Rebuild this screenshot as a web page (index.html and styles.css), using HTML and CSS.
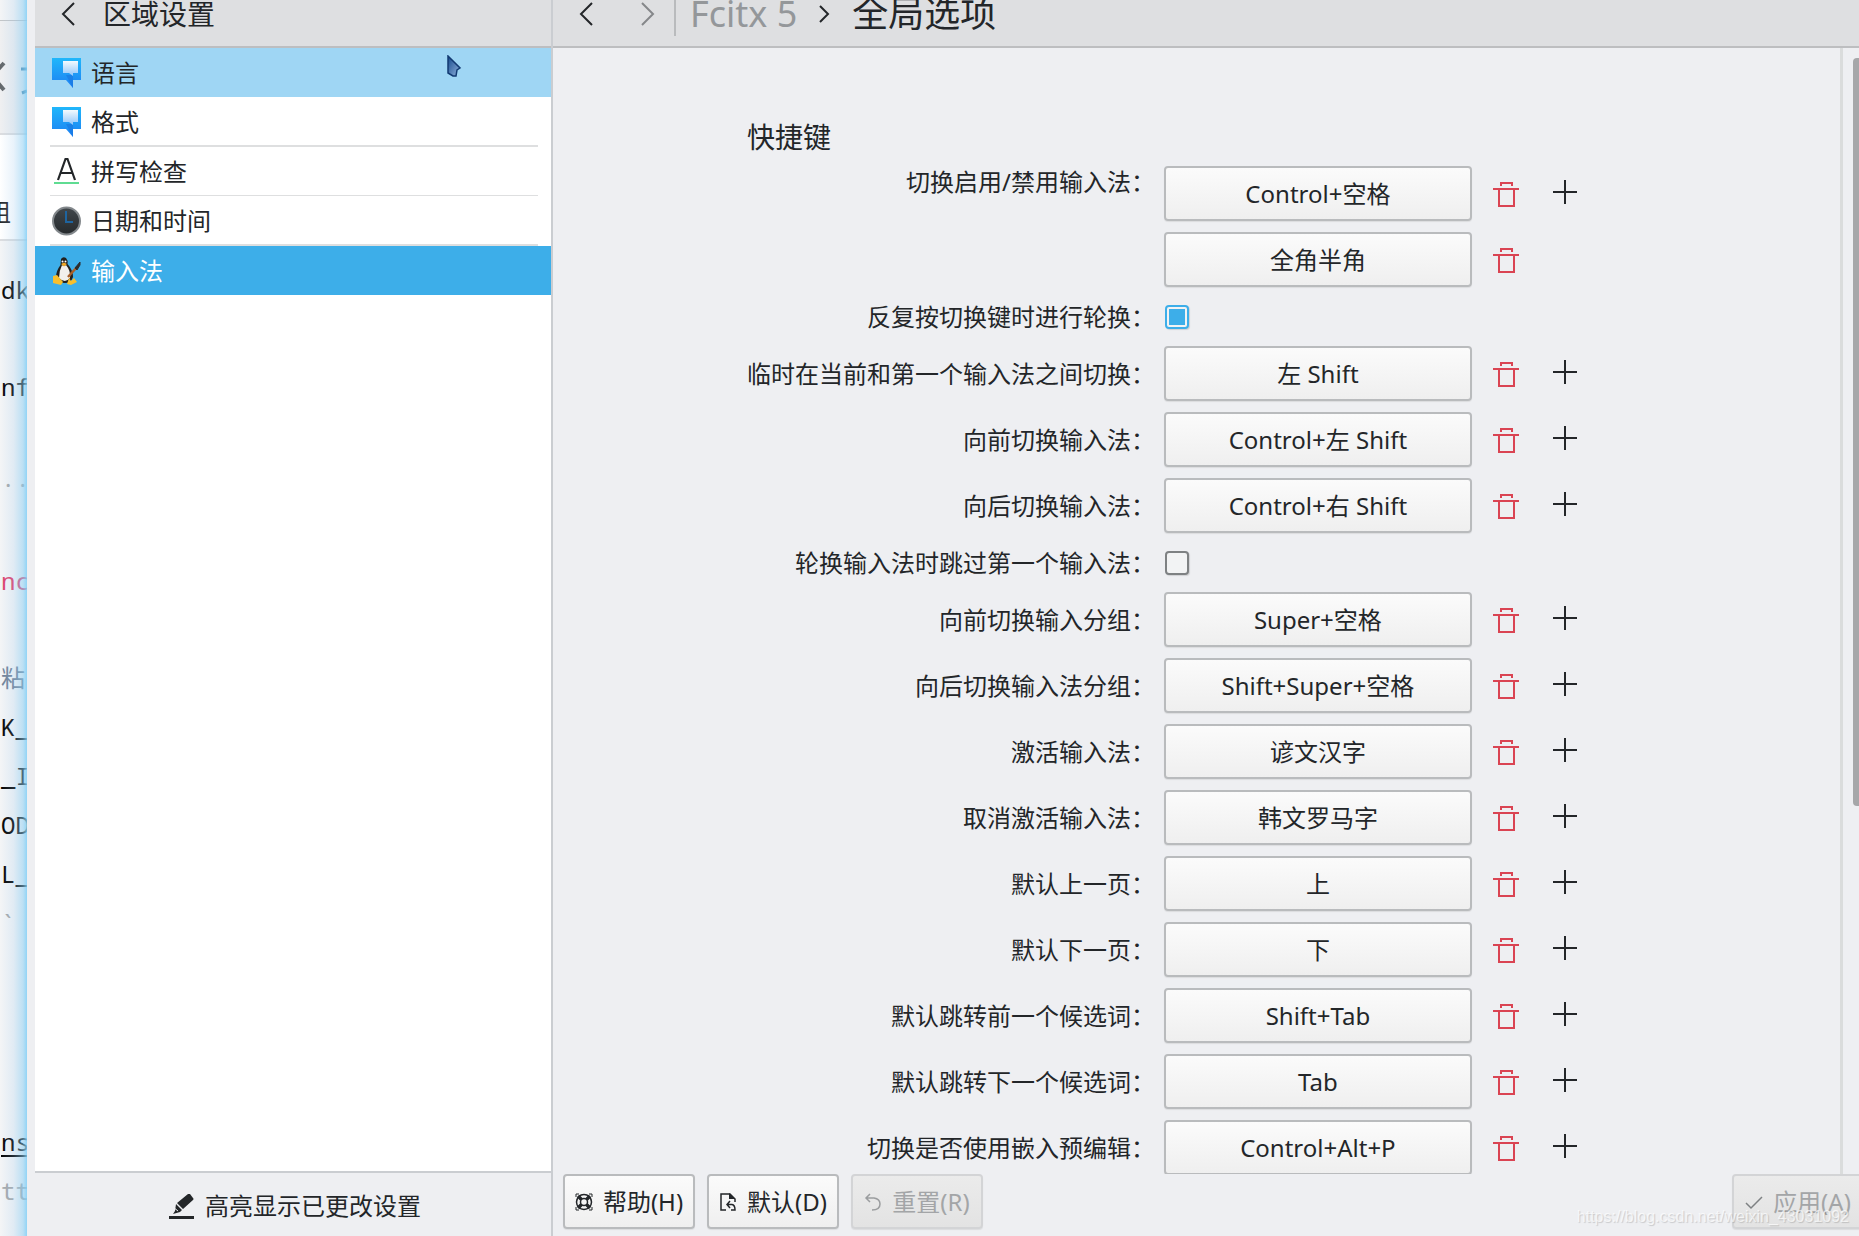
FILE: index.html
```
<!DOCTYPE html>
<html lang="zh-CN">
<head>
<meta charset="utf-8">
<title>区域设置</title>
<link rel="stylesheet" href="styles.css">
</head>
<body>
<svg class="defs" aria-hidden="true">
  <defs>
    <linearGradient id="blue" x1="0" y1="0" x2="0" y2="1"><stop offset="0" stop-color="#20b7fb"/><stop offset="1" stop-color="#1d7ff2"/></linearGradient>
    <linearGradient id="pale" x1="0" y1="0" x2="0" y2="1"><stop offset="0" stop-color="#f4fafe"/><stop offset="1" stop-color="#8fc5fa"/></linearGradient>
    <linearGradient id="clockface" x1="0" y1="0" x2="0" y2="1"><stop offset="0" stop-color="#41474c"/><stop offset="1" stop-color="#25292c"/></linearGradient>
    <linearGradient id="pointer" x1="0" y1="0" x2="1" y2="1"><stop offset="0" stop-color="#16498c"/><stop offset="1" stop-color="#8fb2dc"/></linearGradient>
    <symbol id="locale" viewBox="0 0 29 30">
      <path d="M0 0H29V22H21V30L14 22H0Z" fill="url(#blue)"/>
      <path d="M14 17L21 30V17Z" fill="#1774dd" opacity=".6"/>
      <path d="M11 3H26V15H21V18L17 15H11Z" fill="url(#pale)"/>
    </symbol>
    <symbol id="trash" viewBox="0 0 26 26">
      <path d="M8 5V2H19V5M0 8H26M6 8V25H21V8" fill="none" stroke="#da4453" stroke-width="2"/>
    </symbol>
    <symbol id="plus" viewBox="0 0 24 24">
      <path d="M12 0V24M0 12H24" fill="none" stroke="#232629" stroke-width="2"/>
    </symbol>
  </defs>
</svg>

<div class="desktop">
  <div class="backdrop" aria-hidden="true">
    <div class="back-title"></div>
    <div class="back-toolbar">
      <svg width="27" height="34" viewBox="0 0 27 34" fill="none"><path d="M4 2L-8 15L4 29" stroke="#63676a" stroke-width="4"/><path d="M21 8H27M22 32L27 30" stroke="#3f7fa5" stroke-width="3"/></svg>
    </div>
    <div class="back-tab"><span>组</span></div>
    <div class="back-code">
      <div>dk</div><div></div><div>nf</div><div></div><div class="dim">··</div><div></div>
      <div class="red">nc</div><div></div><div class="slate">粘</div><div>K_</div><div>_I</div><div>OD</div><div>L_</div><div class="dim">`</div>
      <div></div><div></div><div></div><div class="half"></div><div class="link">ns</div><div class="dim">tt</div><div class="dim">no</div>
    </div>
  </div>

  <div class="window">
    <aside class="sidebar">
      <header class="bar">
        <button class="tool" aria-label="返回"><svg width="14" height="24" viewBox="0 0 14 24"><path d="M13 1L2 12L13 23"/></svg></button>
        <h2>区域设置</h2>
      </header>
      <nav>
        <ul>
          <li class="hover"><a href="#"><svg width="29" height="30"><use href="#locale"/></svg>语言</a></li>
          <li><a href="#"><svg width="29" height="30"><use href="#locale"/></svg>格式</a></li>
          <li><a href="#"><svg width="29" height="30" viewBox="0 0 29 30"><path d="M6 23L13.500 2H15.500L23 23M9 16H20" fill="none" stroke="#232629" stroke-width="2.200"/><path d="M2 26H27" stroke="#5fdc92" stroke-width="2"/></svg>拼写检查</a></li>
          <li><a href="#"><svg width="29" height="30" viewBox="0 0 29 30"><circle cx="14.500" cy="15" r="13.500" fill="url(#clockface)" stroke="#83888c" stroke-width="2"/><path d="M14 5V16H21" fill="none" stroke="#1e64a0" stroke-width="2"/></svg>日期和时间</a></li>
          <li class="current"><a href="#" aria-current="page"><svg width="29" height="30" viewBox="0 0 29 30">
            <path d="M9 3Q11 0 14 2Q16 4 15.500 8Q21 14 21 21Q19 27 13 27Q6 27 4 21Q4 15 8.500 9Z" fill="#22211f"/>
            <path d="M10 9Q12 11 14 9Q19 15 18 22Q13 28 7 22Q7 15 10 9Z" fill="#f2f0ec"/>
            <circle cx="10.500" cy="5.500" r="1" fill="#fff"/><circle cx="13.500" cy="5.500" r="1" fill="#fff"/>
            <path d="M9 8L12 6.500L15 8L12 10.500Z" fill="#f0a928"/>
            <path d="M1 20L5 19L11 26L9 29L1 27ZM17 22L19 25L22 22L25 26L19 29L15 28Z" fill="#f8bf2c"/>
            <path d="M16 21L25 11" stroke="#a8602b" stroke-width="2.500"/><path d="M23 12L28 6L28 9L25 14Z" fill="#2d2b2a" stroke="#2d2b2a"/>
          </svg>输入法</a></li>
        </ul>
      </nav>
      <footer>
        <button class="highlight"><svg width="25" height="25" viewBox="0 0 25 25"><path d="M0 22H25V25H0Z" fill="#232629"/><path d="M19 0Q20 -1 21 0L24 4Q25 5 24 6L14 15L8 9ZM7 10L13 16L11 18L4 20L6 17Z" fill="#232629"/><path d="M4 13L9 17" stroke="#eeeff2"/></svg>高亮显示已更改设置</button>
      </footer>
    </aside>

    <main>
      <header class="bar">
        <button class="tool" aria-label="后退"><svg width="14" height="24" viewBox="0 0 14 24"><path d="M13 1L2 12L13 23"/></svg></button>
        <button class="tool forward" aria-label="前进" disabled><svg width="14" height="24" viewBox="0 0 14 24"><path d="M1 1L12 12L1 23"/></svg></button>
        <div class="crumbs">
          <a href="#">Fcitx 5</a>
          <svg width="11" height="18" viewBox="0 0 11 18"><path d="M1 1L9 9L1 17"/></svg>
          <h1>全局选项</h1>
        </div>
      </header>

      <div class="scroller">
        <form class="content" id="options">
          <h3>快捷键</h3>
          <div class="row"><span class="label top">切换启用/禁用输入法：</span><button type="button" class="btn">Control+空格</button><button type="button" class="act" aria-label="删除"><svg width="26" height="26"><use href="#trash"/></svg></button><button type="button" class="act add" aria-label="添加"><svg width="24" height="24"><use href="#plus"/></svg></button></div>
          <div class="row"><span></span><button type="button" class="btn">全角半角</button><button type="button" class="act" aria-label="删除"><svg width="26" height="26"><use href="#trash"/></svg></button></div>
          <div class="row check"><label class="label" for="cycle">反复按切换键时进行轮换：</label><input type="checkbox" id="cycle" checked></div>
          <div class="row"><span class="label">临时在当前和第一个输入法之间切换：</span><button type="button" class="btn">左 Shift</button><button type="button" class="act" aria-label="删除"><svg width="26" height="26"><use href="#trash"/></svg></button><button type="button" class="act add" aria-label="添加"><svg width="24" height="24"><use href="#plus"/></svg></button></div>
          <div class="row"><span class="label">向前切换输入法：</span><button type="button" class="btn">Control+左 Shift</button><button type="button" class="act" aria-label="删除"><svg width="26" height="26"><use href="#trash"/></svg></button><button type="button" class="act add" aria-label="添加"><svg width="24" height="24"><use href="#plus"/></svg></button></div>
          <div class="row"><span class="label">向后切换输入法：</span><button type="button" class="btn">Control+右 Shift</button><button type="button" class="act" aria-label="删除"><svg width="26" height="26"><use href="#trash"/></svg></button><button type="button" class="act add" aria-label="添加"><svg width="24" height="24"><use href="#plus"/></svg></button></div>
          <div class="row check"><label class="label" for="skip">轮换输入法时跳过第一个输入法：</label><input type="checkbox" id="skip"></div>
          <div class="row"><span class="label">向前切换输入分组：</span><button type="button" class="btn">Super+空格</button><button type="button" class="act" aria-label="删除"><svg width="26" height="26"><use href="#trash"/></svg></button><button type="button" class="act add" aria-label="添加"><svg width="24" height="24"><use href="#plus"/></svg></button></div>
          <div class="row"><span class="label">向后切换输入法分组：</span><button type="button" class="btn">Shift+Super+空格</button><button type="button" class="act" aria-label="删除"><svg width="26" height="26"><use href="#trash"/></svg></button><button type="button" class="act add" aria-label="添加"><svg width="24" height="24"><use href="#plus"/></svg></button></div>
          <div class="row"><span class="label">激活输入法：</span><button type="button" class="btn">谚文汉字</button><button type="button" class="act" aria-label="删除"><svg width="26" height="26"><use href="#trash"/></svg></button><button type="button" class="act add" aria-label="添加"><svg width="24" height="24"><use href="#plus"/></svg></button></div>
          <div class="row"><span class="label">取消激活输入法：</span><button type="button" class="btn">韩文罗马字</button><button type="button" class="act" aria-label="删除"><svg width="26" height="26"><use href="#trash"/></svg></button><button type="button" class="act add" aria-label="添加"><svg width="24" height="24"><use href="#plus"/></svg></button></div>
          <div class="row"><span class="label">默认上一页：</span><button type="button" class="btn">上</button><button type="button" class="act" aria-label="删除"><svg width="26" height="26"><use href="#trash"/></svg></button><button type="button" class="act add" aria-label="添加"><svg width="24" height="24"><use href="#plus"/></svg></button></div>
          <div class="row"><span class="label">默认下一页：</span><button type="button" class="btn">下</button><button type="button" class="act" aria-label="删除"><svg width="26" height="26"><use href="#trash"/></svg></button><button type="button" class="act add" aria-label="添加"><svg width="24" height="24"><use href="#plus"/></svg></button></div>
          <div class="row"><span class="label">默认跳转前一个候选词：</span><button type="button" class="btn">Shift+Tab</button><button type="button" class="act" aria-label="删除"><svg width="26" height="26"><use href="#trash"/></svg></button><button type="button" class="act add" aria-label="添加"><svg width="24" height="24"><use href="#plus"/></svg></button></div>
          <div class="row"><span class="label">默认跳转下一个候选词：</span><button type="button" class="btn">Tab</button><button type="button" class="act" aria-label="删除"><svg width="26" height="26"><use href="#trash"/></svg></button><button type="button" class="act add" aria-label="添加"><svg width="24" height="24"><use href="#plus"/></svg></button></div>
          <div class="row"><span class="label">切换是否使用嵌入预编辑：</span><button type="button" class="btn">Control+Alt+P</button><button type="button" class="act" aria-label="删除"><svg width="26" height="26"><use href="#trash"/></svg></button><button type="button" class="act add" aria-label="添加"><svg width="24" height="24"><use href="#plus"/></svg></button></div>
        </form>
        <div class="track"><div class="thumb"></div></div>
      </div>

      <footer class="actions">
        <button class="btn"><svg width="18" height="18" viewBox="0 0 18 18"><g fill="none" stroke="#232629"><circle cx="9" cy="9" r="7.500" stroke-width="1.500"/><circle cx="9" cy="9" r="3.500" stroke-width="1.500"/><path d="M3 3L6.500 6.500M15 3L11.500 6.500M3 15L6.500 11.500M15 15L11.500 11.500" stroke-width="3.500"/><path d="M1 4V1H4M14 1H17V4M17 14V17H14M4 17H1V14"/></g></svg>帮助(H)</button>
        <button class="btn"><svg width="18" height="18" viewBox="0 0 18 18"><g fill="none" stroke="#232629" stroke-width="1.500"><path d="M7 17H2V1H11L16 6V9"/><path d="M11 8L8 11.500L11 15M8 11.500H13Q16 12 16 17H12"/></g><path d="M10 0L16 6H10Z" fill="#232629"/></svg>默认(D)</button>
        <button class="btn" disabled><svg width="18" height="18" viewBox="0 0 18 18"><path d="M6 1L2 5L6 9M2 5H10Q16 6 16 11Q16 17 8 17" fill="none" stroke="#9b9d9f" stroke-width="1.500"/></svg>重置(R)</button>
        <button class="btn apply" disabled><svg width="18" height="18" viewBox="0 0 18 18"><path d="M1 10L6 15L17 4" fill="none" stroke="#7e8183" stroke-width="1.500"/></svg>应用(A)</button>
      </footer>
    </main>
  </div>

  <svg class="cursor" width="15" height="24" viewBox="0 0 15 24" aria-hidden="true"><path d="M1 1L13 13L10 15L9 21L6 21L1 18Z" fill="url(#pointer)" stroke="#123a72" stroke-width="1.500"/></svg>
  <div class="watermark">https://blog.csdn.net/weixin_43031092</div>
</div>
</body>
</html>
```
FILE: styles.css
```
* { box-sizing: border-box; }

body {
  margin: 0;
  color: #232629;
  font: 24px/32px "Noto Sans", "Noto Sans CJK SC", sans-serif;
}

h1, h2, h3, ul { margin: 0; padding: 0; font-weight: 400; }
ul { list-style: none; }
a { color: inherit; text-decoration: none; }
button { font: inherit; color: inherit; padding: 0; border: 0; background: none; }
svg { flex: none; display: block; }
.defs { position: absolute; width: 0; height: 0; }

.desktop {
  position: relative;
  display: flex;
  height: 100vh;
  overflow: hidden;
}

/* strip of the window behind, shaded by the glow of the front window */
.backdrop {
  position: relative;
  flex: none;
  width: 27px;
  overflow: hidden;
  background: #f4f5f6;
  font: 24px/49px "Noto Sans CJK SC", sans-serif;
  white-space: nowrap;
}
.backdrop::after {
  content: "";
  position: absolute;
  inset: 0;
  background: linear-gradient(90deg, #8ac6ea00, #9cc8ec38 50%, #8bcdf288 85%, #83cff6e0);
}
.back-title { height: 21px; border-bottom: 1px solid #c3c5c7; }
.back-toolbar { height: 114px; padding-top: 40px; background: #f0f0f1; border-bottom: 2px solid #dcdddf; }
.back-tab { height: 106px; padding-top: 51px; background: #fff; border-bottom: 2px solid #dcdddf; }
.back-tab span { margin-left: -13px; }
.back-code { padding-top: 24px; color: #000; font-family: "Noto Sans Mono", "DejaVu Sans Mono", "Noto Sans CJK SC", monospace; }
.back-code div { height: 49px; padding-left: 1px; }
.back-code div:empty { height: 48px; }
.back-code .half:empty { height: 26px; }
.back-code .dim { color: #a5a8aa; }
.back-code .red { color: #e0406c; }
.back-code .slate { color: #6f8197; }
.link { text-decoration: underline; text-underline-offset: 4px; }

.window {
  flex: 1;
  min-width: 0;
  display: flex;
  padding-left: 8px;
  background: #eeeff2;
}
.sidebar {
  flex: none;
  width: 518px;
  display: flex;
  flex-direction: column;
  border-right: 2px solid #cacdd1;
}
.bar {
  flex: none;
  display: flex;
  align-items: center;
  height: 48px;
  padding: 0 26px 18px;
  background: #dedfe1;
  border-bottom: 2px solid #bdbec0;
}
.bar svg { fill: none; stroke: #232629; stroke-width: 2; }
h2 { margin-left: 28px; font-size: 28px; line-height: 28px; }

nav { flex: 1; background: #fff; }
nav li { padding: 0 13px 0 15px; }
nav a {
  display: flex;
  align-items: center;
  gap: 10px;
  height: 49px;
  padding: 2px 0 0 2px;
  border-bottom: 1px solid #dedfe0;
}
nav li:nth-child(even) a { height: 50px; border-width: 2px; }
nav .hover { background: #9fd6f4; }
nav .hover a, nav .current a { border-color: transparent; }
nav .current { background: #3daee9; color: #fff; }

.sidebar footer {
  flex: none;
  display: flex;
  justify-content: center;
  align-items: center;
  height: 65px;
  padding: 3px 0 0 4px;
  border-top: 2px solid #cacdd1;
}
.highlight { display: flex; align-items: center; gap: 11px; }

main {
  flex: 1;
  min-width: 0;
  display: flex;
  flex-direction: column;
}
.forward { margin-left: 48px; }
.bar .forward svg { stroke: #85878a; }
.crumbs {
  display: flex;
  align-items: center;
  gap: 22px;
  height: 44px;
  margin: 0 0 0 19px;
  padding: 0 0 0 14px;
  border-left: 2px solid #b9bbbd;
  font-size: 36px;
  line-height: 36px;
}
.crumbs a { color: #94979a; }
h1 { font-size: 36px; line-height: 36px; }

.scroller {
  flex: 1;
  min-height: 0;
  display: flex;
  overflow: hidden;
}
.content {
  flex: 1;
  display: flex;
  flex-direction: column;
  gap: 11px;
  padding: 71px 0 0 calc(15% - 2px);
}
h3 { font-size: 28px; line-height: 36px; }
.row {
  flex: none;
  display: grid;
  grid-template-columns: 408px 308px 50px 50px;
  column-gap: 9px;
  align-items: center;
}
.row.check { height: 37px; }
.label { text-align: right; white-space: nowrap; }
.label.top { align-self: start; }

.btn {
  display: flex;
  justify-content: center;
  align-items: center;
  gap: 10px;
  height: 55px;
  border: 2px solid #b9bbbd;
  border-radius: 4px;
  background: linear-gradient(#fbfbfb, #efefef);
  box-shadow: 0 1px 1px #00000014;
  white-space: nowrap;
}
.btn:disabled { color: #a3a5a7; border-color: #d3d4d6; background: linear-gradient(#ebebeb, #e3e3e3); }
.act { display: flex; justify-content: center; }
.act.add { padding-bottom: 4px; }

input[type="checkbox"] {
  appearance: none;
  width: 24px;
  height: 24px;
  margin: 0 0 0 1px;
  border: 2px solid #7e8183;
  border-radius: 4px;
  background: #f2f3f4;
  box-shadow: 1px 1px 1px #00000020;
}
input[type="checkbox"]:checked {
  padding: 2px;
  border-color: #3daee9;
  background: linear-gradient(#3daee9, #3daee9) content-box, #f2f3f4;
}

.track { flex: none; width: 19px; padding: 10px 0 0 10px; border-left: 3px solid #dadcdc; }
.thumb { height: 67%; border-radius: 4px 0 0 4px; background: #a6a7a9; }

.actions {
  flex: none;
  display: flex;
  gap: 12px;
  height: 62px;
  padding-left: 10px;
  overflow: hidden;
}
.actions .btn { flex: none; width: 132px; }
.actions .apply { margin: 0 -5px 0 auto; }

.cursor { position: absolute; left: 447px; top: 55px; }
.watermark {
  position: absolute;
  right: 10px;
  bottom: 7px;
  color: #ffffffb0;
  font: 16px/24px "Liberation Sans", sans-serif;
  text-shadow: 1px 1px 1px #00000028;
}
```
